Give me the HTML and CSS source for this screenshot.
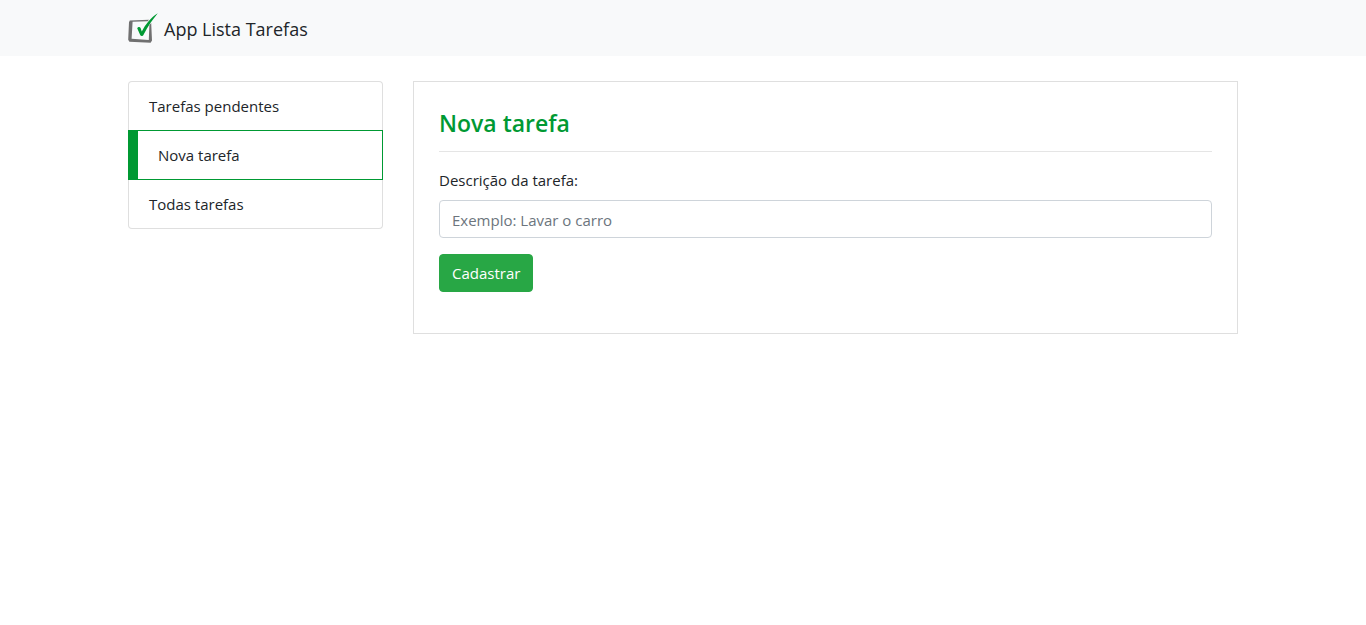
FILE: index.html
```html
<!DOCTYPE html>
<html lang="pt-br">
<head>
<meta charset="utf-8">
<meta name="viewport" content="width=device-width, initial-scale=1">
<title>App Lista Tarefas</title>
<link rel="stylesheet" href="styles.css">
</head>
<body>
<nav class="navbar">
  <div class="container">
    <a class="brand" href="#">
      <svg class="logo" viewBox="0 0 30 30" aria-hidden="true">
        <path fill="#707070" fill-rule="evenodd" d="M1.8 7.6 L21 6.8 L19.6 8.2 L4.6 8.8 L3.6 25.8 L20.8 27 L21.4 12 L23.2 10 L24 27.5 L22.6 29.8 L1.4 28.7 L.2 26.8 L1 9.2Z"/>
        <path fill="#009933" d="M9.2 15.3 C10 13.7 12 13.6 12.6 15.1 L13.8 18.6 C17.5 11.3 22.4 5 29.8 .2 C24.5 6.7 19.6 13.3 15.7 21.5 C14.8 23.3 12.9 23.6 12.2 21.9Z"/>
      </svg>
      <span class="brand-name">App Lista Tarefas</span>
    </a>
  </div>
</nav>
<div class="container layout">
  <ul class="menu">
    <li class="menu-item"><a href="#">Tarefas pendentes</a></li>
    <li class="menu-item active"><a href="#" aria-current="page">Nova tarefa</a></li>
    <li class="menu-item"><a href="#">Todas tarefas</a></li>
  </ul>
  <main class="panel">
    <h4 class="title">Nova tarefa</h4>
    <hr class="divider">
    <form>
      <div class="group">
        <label class="label" for="tarefa">Descrição da tarefa:</label>
        <input class="field" type="text" id="tarefa" placeholder="Exemplo: Lavar o carro">
      </div>
      <button class="button" type="button">Cadastrar</button>
    </form>
  </main>
</div>
</body>
</html>
```
FILE: styles.css
```css
* { box-sizing: border-box; }

body {
  margin: 0;
  background: #fff;
  color: #212529;
  font: 15px/24px "Open Sans", "Noto Sans", sans-serif;
}

a { color: inherit; text-decoration: none; }

.container {
  max-width: 1140px;
  margin: 0 auto;
  padding: 0 15px;
}

.navbar { padding: 8px 0; background: #f8f9fa; }

.brand {
  display: inline-flex;
  align-items: center;
  gap: 6px;
  height: 40px;
  vertical-align: top;
  font-size: 18px;
}

.brand-name { padding-top: 2px; }

.logo { width: 30px; height: 30px; }

.layout {
  display: grid;
  grid-template-columns: minmax(0, 255fr) minmax(0, 825fr);
  gap: 30px;
  align-items: start;
  margin-top: 25px;
}

.menu {
  margin: 0;
  padding: 0;
  list-style: none;
}

.menu-item {
  padding: 12px 20px;
  border: 1px solid #dfdfdf;
}

.menu-item:first-child {
  border-bottom: 0;
  border-radius: 4px 4px 0 0;
}

.menu-item:last-child {
  border-top: 0;
  border-radius: 0 0 4px 4px;
}

.menu-item.active {
  border-color: #009933;
  border-left-width: 10px;
}

.menu-item a { display: block; }

.panel {
  padding: 25px 25px 41px;
  border: 1px solid #dfdfdf;
}

.title {
  margin: 0;
  color: #009933;
  font-size: 23px;
  line-height: 32px;
  font-weight: 600;
}

.divider {
  margin: 12px 0 16px;
  border: 0;
  border-top: 1px solid #e5e5e5;
}

.group { margin-bottom: 16px; }

.label { display: block; margin-bottom: 8px; }

.field {
  display: block;
  width: 100%;
  height: 38px;
  padding: 7px 12px 5px;
  border: 1px solid #ced4da;
  border-radius: 4px;
  color: #495057;
  font: inherit;
}

.field::placeholder { color: #6c757d; opacity: 1; }

.button {
  display: block;
  padding: 6px 12px;
  border: 1px solid #28a745;
  border-radius: 4px;
  background: #28a745;
  color: #fff;
  font: inherit;
}
```
